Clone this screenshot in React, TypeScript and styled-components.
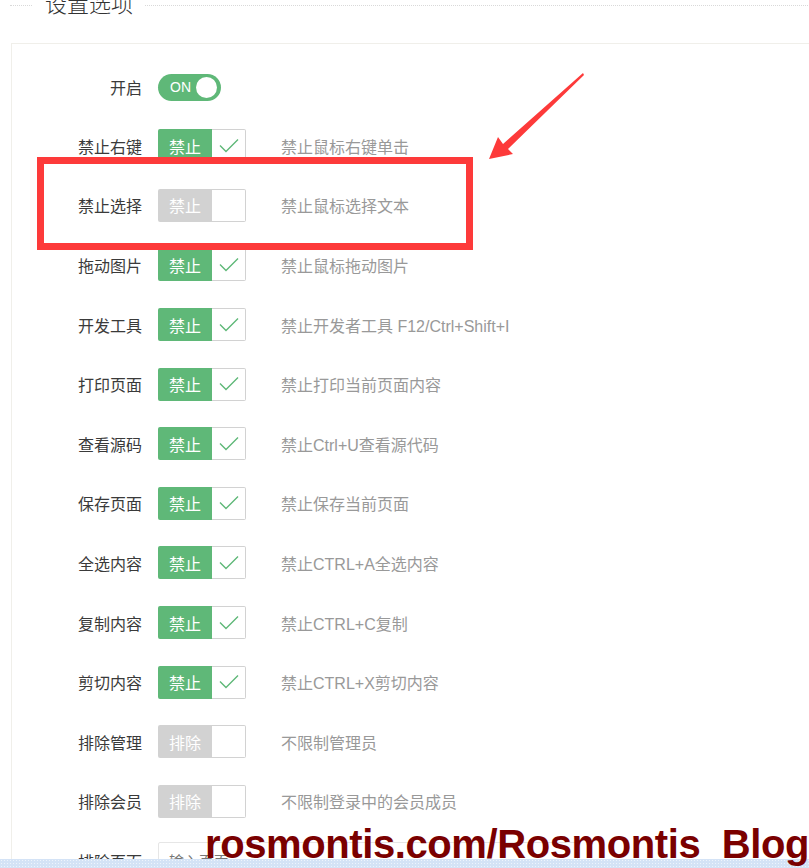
import React from "react";
import styled, { createGlobalStyle } from "styled-components";

const GlobalStyle = createGlobalStyle`
  html, body {
    margin: 0;
    padding: 0;
    background: #fff;
    overflow: hidden;
  }
  body {
    font-family: "Liberation Sans", "Noto Sans CJK SC", sans-serif;
    color: #333;
  }
`;

const green = "#5FB878";
const gray = "#d2d2d2";

const Page = styled.div`
  position: relative;
  width: 809px;
  height: 868px;
  overflow: hidden;
`;

const Fieldset = styled.fieldset`
  margin: -8px 0 0 10px;
  padding: 0;
  width: 1000px;
  border: none;
  border-top: 1px dotted #d9d9d9;
`;

const Legend = styled.legend`
  margin-left: 23px;
  padding: 0 12px;
  font-size: 22px;
  line-height: 26px;
  font-weight: 300;
  color: #333;
`;

const Card = styled.div`
  margin: 25px 0 0 1px;
  padding: 14px 0;
  border: 1px solid #f0efea;
  min-height: 900px;
`;

const Row = styled.div<{ $h: number }>`
  display: flex;
  align-items: center;
  height: ${(p) => p.$h}px;
`;

const Label = styled.div`
  width: 130px;
  margin-right: 16px;
  text-align: right;
  font-size: 16px;
  color: #3a3a3a;
`;

const Switch = styled.div`
  display: flex;
  align-items: center;
  justify-content: space-between;
  box-sizing: border-box;
  width: 63px;
  height: 27px;
  padding: 0 4px 0 12px;
  border-radius: 14px;
  background: ${green};
  color: #fff;
  font-size: 14px;
`;

const Knob = styled.span`
  width: 21px;
  height: 21px;
  border-radius: 50%;
  background: #fff;
`;

const Check = styled.div`
  display: flex;
  width: 88px;
  height: 33px;
  box-sizing: border-box;
`;

const CheckText = styled.span<{ $on: boolean }>`
  display: flex;
  align-items: center;
  justify-content: center;
  width: 54px;
  border-radius: 2px 0 0 2px;
  background: ${(p) => (p.$on ? green : gray)};
  color: #fff;
  font-size: 16px;
`;

const CheckBox = styled.span`
  display: flex;
  align-items: center;
  justify-content: center;
  flex: 1;
  border: 1px solid ${gray};
  border-left: none;
  border-radius: 0 2px 2px 0;
  background: #fff;
`;

const Desc = styled.div`
  margin-left: 35px;
  font-size: 16px;
  color: #999;
`;

const Input = styled.div`
  display: flex;
  align-items: center;
  box-sizing: border-box;
  width: 420px;
  height: 38px;
  padding-left: 10px;
  border: 1px solid #e6e6e6;
  border-radius: 2px;
  font-size: 15px;
  color: #777;
`;

const Frame = styled.div`
  position: absolute;
  left: 37px;
  top: 157px;
  width: 436px;
  height: 93px;
  box-sizing: border-box;
  border: 7px solid #fd3a3a;
`;

const Arrow = styled.svg`
  position: absolute;
  left: 0;
  top: 0;
`;

const Watermark = styled.div`
  position: absolute;
  left: 205px;
  top: 821px;
  font-family: "Liberation Sans", sans-serif;
  font-weight: bold;
  font-size: 40px;
  line-height: 46px;
  letter-spacing: -0.4px;
  white-space: pre;
  color: #7a0000;
  z-index: 2;
`;

const Taskbar = styled.div`
  position: absolute;
  left: 0;
  right: 0;
  bottom: 0;
  height: 9px;
  background-color: #d4e3f6;
  background-image: radial-gradient(#eef4fc 0.6px, transparent 0.8px);
  background-size: 3px 3px;
  z-index: 1;
`;

const rules = [
  { label: "禁止右键", on: true, desc: "禁止鼠标右键单击" },
  { label: "禁止选择", on: false, desc: "禁止鼠标选择文本" },
  { label: "拖动图片", on: true, desc: "禁止鼠标拖动图片" },
  { label: "开发工具", on: true, desc: "禁止开发者工具 F12/Ctrl+Shift+I" },
  { label: "打印页面", on: true, desc: "禁止打印当前页面内容" },
  { label: "查看源码", on: true, desc: "禁止Ctrl+U查看源代码" },
  { label: "保存页面", on: true, desc: "禁止保存当前页面" },
  { label: "全选内容", on: true, desc: "禁止CTRL+A全选内容" },
  { label: "复制内容", on: true, desc: "禁止CTRL+C复制" },
  { label: "剪切内容", on: true, desc: "禁止CTRL+X剪切内容" },
  { label: "排除管理", on: false, text: "排除", desc: "不限制管理员" },
  { label: "排除会员", on: false, text: "排除", desc: "不限制登录中的会员成员" },
];

function Tick() {
  return (
    <svg width="20" height="16" viewBox="0 0 20 16">
      <path d="M1 7.5 L7 13.5 L19 1.5" fill="none" stroke={green} strokeWidth="1.4" />
    </svg>
  );
}

export default function App() {
  return (
    <Page>
      <GlobalStyle />
      <Fieldset>
        <Legend>设置选项</Legend>
        <Card>
          <Row $h={58}>
            <Label>开启</Label>
            <Switch>
              ON
              <Knob />
            </Switch>
          </Row>
          {rules.map((r) => (
            <Row $h={59.6} key={r.label}>
              <Label>{r.label}</Label>
              <Check>
                <CheckText $on={r.on}>{r.text || "禁止"}</CheckText>
                <CheckBox>{r.on && <Tick />}</CheckBox>
              </Check>
              <Desc>{r.desc}</Desc>
            </Row>
          ))}
          <Row $h={59.6}>
            <Label>排除页面</Label>
            <Input>输入页面</Input>
          </Row>
        </Card>
      </Fieldset>

      {/* annotation overlays */}
      <Frame />
      <Arrow width="809" height="868" viewBox="0 0 809 868">
        <polygon points="583,73 584,75 508,149 513,154 489,159 498,137 503,144" fill="#fd3a3a" />
      </Arrow>
      <Watermark>{"rosmontis.com/Rosmontis  Blog"}</Watermark>
      <Taskbar />
    </Page>
  );
}
